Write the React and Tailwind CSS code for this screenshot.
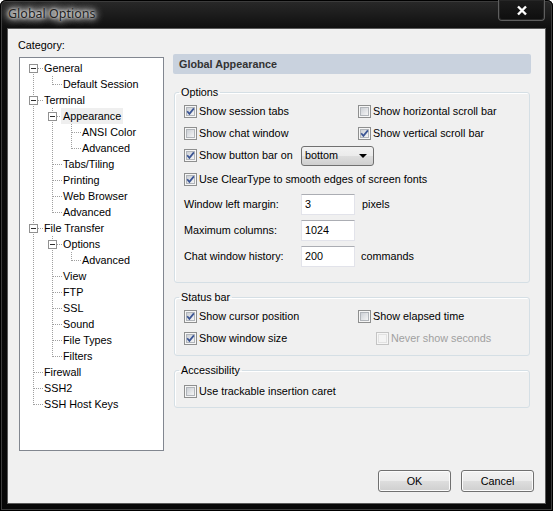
import React from 'react'

const tree = [
    {l: 0, t: 'General', exp: true},
    {l: 1, t: 'Default Session'},
    {l: 0, t: 'Terminal', exp: true},
    {l: 1, t: 'Appearance', exp: true, sel: true},
    {l: 2, t: 'ANSI Color'},
    {l: 2, t: 'Advanced'},
    {l: 1, t: 'Tabs/Tiling'},
    {l: 1, t: 'Printing'},
    {l: 1, t: 'Web Browser'},
    {l: 1, t: 'Advanced'},
    {l: 0, t: 'File Transfer', exp: true},
    {l: 1, t: 'Options', exp: true},
    {l: 2, t: 'Advanced'},
    {l: 1, t: 'View'},
    {l: 1, t: 'FTP'},
    {l: 1, t: 'SSL'},
    {l: 1, t: 'Sound'},
    {l: 1, t: 'File Types'},
    {l: 1, t: 'Filters'},
    {l: 0, t: 'Firewall'},
    {l: 0, t: 'SSH2'},
    {l: 0, t: 'SSH Host Keys'},
]

// does level `a` continue below row i (another sibling later on)?
function continues(i, a) {
    for (let j = i + 1; j < tree.length; j++) {
        if (tree[j].l < a) return false
        if (tree[j].l === a) return true
    }
    return false
}

const TreeRow = ({row, i}) => {
    const {l, t, exp, sel} = row
    const cx = (k) => 13.5 + 19 * k
    const w = 24 + 19 * l
    const dots = {stroke: '#a0a0a0', strokeDasharray: '1 1', shapeRendering: 'crispEdges'}

    const lines = []
    for (let a = 0; a < l; a++) {
        if (continues(i, a)) lines.push(<line key={'a' + a} x1={cx(a)} y1="0" x2={cx(a)} y2="16" {...dots}/>)
    }
    lines.push(<line key="own" x1={cx(l)} y1={i === 0 ? 8 : 0} x2={cx(l)} y2={continues(i, l) ? 16 : 9} {...dots}/>)
    lines.push(<line key="h" x1={exp ? 18 + 19 * l : 14 + 19 * l} y1="8.5" x2={w} y2="8.5" {...dots}/>)

    return (
        <div className="flex h-[16px]">
            <svg width={w} height="16" viewBox={`0 0 ${w} 16`} className="shrink-0">
                {lines}
                {exp && (
                    <g shapeRendering="crispEdges">
                        <rect x={9.5 + 19 * l} y="4.5" width="8" height="8" fill="#fff" stroke="#919191"/>
                        <line x1={11 + 19 * l} y1="8.5" x2={16 + 19 * l} y2="8.5" stroke="#2e2e2e"/>
                    </g>
                )}
            </svg>
            <span className={"leading-[16px] whitespace-nowrap " + (sel ? "-ml-[2px] px-[2px] bg-[#efefef]" : "")}>{t}</span>
        </div>
    )
}

const Box = ({checked, disabled}) => (
    <svg width="13" height="13" viewBox="0 0 13 13" className="shrink-0">
        <defs>
            <linearGradient id="cbfill" x1="0" y1="0" x2="1" y2="1">
                <stop offset="0" stopColor="#c9cdd3"/>
                <stop offset="1" stopColor="#f7f7f7"/>
            </linearGradient>
        </defs>
        <g shapeRendering="crispEdges">
            <rect x="0.5" y="0.5" width="12" height="12" fill="#f6f6f6" stroke={disabled ? '#c4c4c4' : '#8e8f8f'}/>
            <rect x="2.5" y="2.5" width="8" height="8" fill={disabled ? '#f4f4f4' : 'url(#cbfill)'}
                  stroke={disabled ? '#e2e2e2' : '#b1b5ba'}/>
        </g>
        {checked && <path d="M3.2 6.3L5.4 8.9L9.9 3.4" fill="none" stroke="#3b5594" strokeWidth="1.7"/>}
    </svg>
)

const Check = ({checked, disabled, children, className = ""}) => (
    <div className={"flex items-center gap-[2px] whitespace-nowrap " + className}>
        <Box checked={checked} disabled={disabled}/>
        <span className={disabled ? "text-[#a0a0a0]" : ""}>{children}</span>
    </div>
)

const TextBox = ({value}) => (
    <div className="w-[54px] h-[21px] bg-white border border-[#e2e3ea] border-t-[#abadb3] pl-[3px] flex items-center">
        {value}
    </div>
)

const winButton = "w-[73px] h-[22px] rounded-[3px] border border-[#707070] flex items-center justify-center " +
    "bg-[linear-gradient(#f2f2f2,#ebebeb_48%,#dddddd_52%,#cfcfcf)] shadow-[inset_0_0_0_1px_#fbfbfb]"

const App = () => {
    return (
        <div className="w-[553px] h-[511px] flex flex-col rounded-t-[6px] overflow-hidden text-[10.8px] text-black font-['Liberation_Sans',Arial,sans-serif] bg-[linear-gradient(#2a2a2a,#0d0d0d_30px,#080808)] shadow-[inset_0_0_0_1px_#000,inset_0_0_0_2px_#3c3c3c]">

            {/* title bar */}
            <div className="h-[29px] flex items-start justify-between shrink-0">
                <div className="pl-[8px] pt-[5px] leading-[18px] text-[12.5px] text-[#222222] font-['Noto_Sans','Open_Sans',sans-serif] [text-shadow:0_0_10px_#ffffff,0_0_10px_#ffffff,0_0_6px_#ffffff,0_0_3px_#f0f0f0]">
                    Global Options
                </div>
                <div className="mr-[8px] w-[47px] h-[21px] rounded-b-[4px] border border-t-0 border-[#5e5e5e] bg-[linear-gradient(#1c1c1c,#0e0e0e)] shadow-[inset_0_0_0_1px_#262626] flex items-center justify-center">
                    <svg width="12" height="11" viewBox="0 0 12 11">
                        <path d="M2 1.5L10 9.5M10 1.5L2 9.5" stroke="#1a1a1a" strokeWidth="4.2"/>
                        <path d="M2 1.5L10 9.5M10 1.5L2 9.5" stroke="#ffffff" strokeWidth="2.4"/>
                    </svg>
                </div>
            </div>

            {/* client area */}
            <div className="mx-[8px] mb-[8px] flex-1 bg-[#f0f0f0] flex flex-col shadow-[0_0_0_1px_#5a5a5a]">
                <div className="flex items-start">

                    {/* category tree */}
                    <div className="pl-[10px] pt-[9px]">
                        <div className="leading-[14px]">Category:</div>
                        <div className="mt-[5px] ml-[1px] w-[145px] h-[394px] bg-white border border-[#828790] pt-[2px] overflow-hidden">
                            {tree.map((row, i) => <TreeRow key={i} row={row} i={i}/>)}
                        </div>
                    </div>

                    {/* settings page */}
                    <div className="ml-[9px] pt-[25px] w-[358px]">
                        <div className="h-[20px] leading-[20px] pl-[6px] rounded-[2px] bg-[#c9d2de] font-bold text-[#333333]">
                            Global Appearance
                        </div>

                        <fieldset className="mt-[11px] mx-[1px] border border-[#d5dfe5] rounded-[3px] pl-[4px] pt-[1px] pb-[13px] shadow-[inset_1px_1px_0_#fff]">
                            <legend className="px-[2px] leading-[14px]">Options</legend>
                            <div className="pl-[5px]">
                                <div className="h-[22px] grid grid-cols-[174px_1fr] items-center">
                                    <Check checked>Show session tabs</Check>
                                    <Check>Show horizontal scroll bar</Check>
                                </div>
                                <div className="h-[22px] grid grid-cols-[174px_1fr] items-center">
                                    <Check>Show chat window</Check>
                                    <Check checked>Show vertical scroll bar</Check>
                                </div>
                                <div className="h-[23px] grid grid-cols-[117px_auto] items-center">
                                    <Check checked>Show button bar on</Check>
                                    <div className="w-[73px] h-[20px] rounded-[3px] border border-[#707070] pl-[3px] pr-[6px] flex items-center justify-between bg-[linear-gradient(#f2f2f2,#ebebeb_48%,#dddddd_52%,#cfcfcf)]">
                                        <span>bottom</span>
                                        <svg width="8" height="4" viewBox="0 0 8 4">
                                            <path d="M0 0H8L4 4Z" fill="#000"/>
                                        </svg>
                                    </div>
                                </div>
                                <div className="h-[24px] flex items-center">
                                    <Check checked>Use ClearType to smooth edges of screen fonts</Check>
                                </div>
                                <div className="h-[26px] grid grid-cols-[117px_54px_auto] items-center">
                                    <span>Window left margin:</span>
                                    <TextBox value="3"/>
                                    <span className="ml-[7px]">pixels</span>
                                </div>
                                <div className="h-[26px] grid grid-cols-[117px_54px_auto] items-center">
                                    <span>Maximum columns:</span>
                                    <TextBox value="1024"/>
                                </div>
                                <div className="h-[26px] grid grid-cols-[117px_54px_auto] items-center">
                                    <span>Chat window history:</span>
                                    <TextBox value="200"/>
                                    <span className="ml-[6px]">commands</span>
                                </div>
                            </div>
                        </fieldset>

                        <fieldset className="mt-[7px] mx-[1px] border border-[#d5dfe5] rounded-[3px] pl-[4px] pt-[1px] pb-[6px] shadow-[inset_1px_1px_0_#fff]">
                            <legend className="px-[2px] leading-[14px]">Status bar</legend>
                            <div className="pl-[5px]">
                                <div className="h-[22px] grid grid-cols-[174px_1fr] items-center">
                                    <Check checked>Show cursor position</Check>
                                    <Check>Show elapsed time</Check>
                                </div>
                                <div className="h-[22px] grid grid-cols-[174px_1fr] items-center">
                                    <Check checked>Show window size</Check>
                                    <Check disabled className="pl-[18px]">Never show seconds</Check>
                                </div>
                            </div>
                        </fieldset>

                        <fieldset className="mt-[7px] mx-[1px] border border-[#d5dfe5] rounded-[3px] pl-[4px] pt-[3px] pb-[5px] shadow-[inset_1px_1px_0_#fff]">
                            <legend className="px-[2px] leading-[14px]">Accessibility</legend>
                            <div className="pl-[5px] h-[22px] flex items-center">
                                <Check>Use trackable insertion caret</Check>
                            </div>
                        </fieldset>
                    </div>
                </div>

                {/* dialog buttons */}
                <div className="mt-auto flex justify-end gap-[10px] pr-[11px] pb-[11px]">
                    <div className={winButton}>OK</div>
                    <div className={winButton}>Cancel</div>
                </div>
            </div>
        </div>
    )
}

export default App
